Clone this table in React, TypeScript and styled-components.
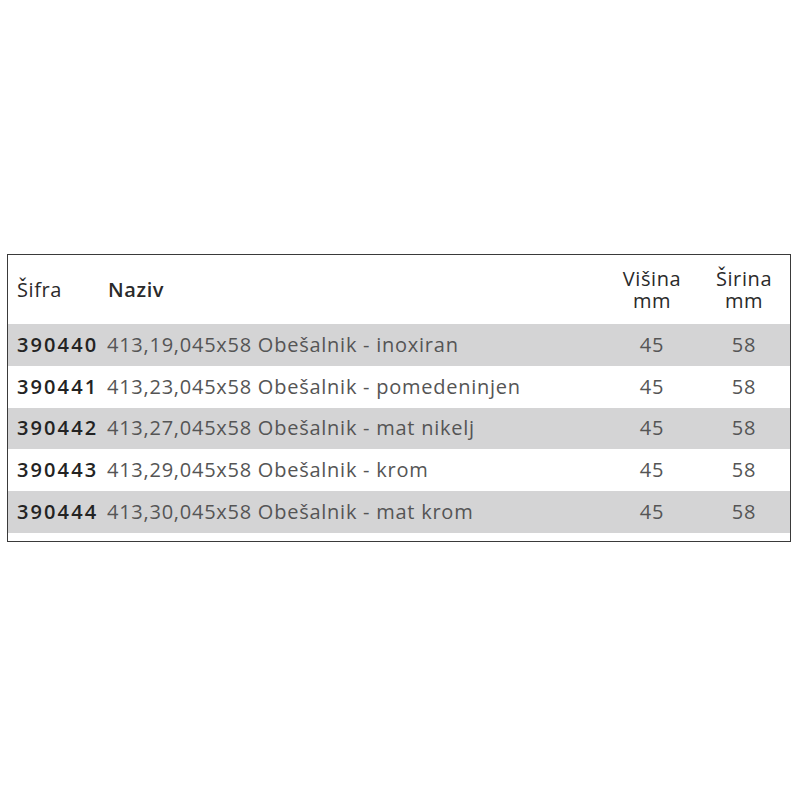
import React from "react";
import styled, { createGlobalStyle } from "styled-components";

const Global = createGlobalStyle`
  html, body { margin: 0; padding: 0; background: #fff; }
  body { font-family: "Open Sans", "Liberation Sans", sans-serif; }
`;

const Frame = styled.div`
  margin: 254px 0 0 7px;
  width: 784px;
  box-sizing: border-box;
  border: 1px solid #3a3a3a;
  padding-bottom: 8px;
`;

const Table = styled.table`
  width: 100%;
  border-collapse: collapse;
  table-layout: fixed;
`;

const HeadRow = styled.tr`
  height: 69px;
`;

const HeadCell = styled.th<{ $align?: "left" | "center"; $strong?: boolean }>`
  padding: 0 0 0 ${(p) => (p.$align === "center" ? 0 : 9)}px;
  text-align: ${(p) => p.$align ?? "left"};
  font-size: 20px;
  line-height: 22px;
  letter-spacing: 0.6px;
  font-weight: ${(p) => (p.$strong ? 600 : 400)};
  color: #2a2a2a;
  vertical-align: middle;
`;

const Row = styled.tr<{ $shaded: boolean }>`
  height: 41.8px;
  background: ${(p) => (p.$shaded ? "#d4d4d5" : "#fff")};
`;

const Code = styled.td`
  padding: 0 0 0 9px;
  font-size: 20px;
  line-height: 24px;
  font-weight: 600;
  letter-spacing: 2.1px;
  color: #232323;
  white-space: nowrap;
`;

const Name = styled.td`
  padding: 0 0 0 8px;
  font-size: 20px;
  line-height: 24px;
  letter-spacing: 0.75px;
  color: #555;
  white-space: nowrap;
`;

const Num = styled.td`
  text-align: center;
  font-size: 20px;
  line-height: 24px;
  letter-spacing: 0.8px;
  color: #555;
`;

const rows = [
  ["390440", "413,19,045x58 Obešalnik - inoxiran"],
  ["390441", "413,23,045x58 Obešalnik - pomedeninjen"],
  ["390442", "413,27,045x58 Obešalnik - mat nikelj"],
  ["390443", "413,29,045x58 Obešalnik - krom"],
  ["390444", "413,30,045x58 Obešalnik - mat krom"],
];

export default function App() {
  return (
    <>
      <Global />
      <Frame>
        <Table>
          <colgroup>
            <col style={{ width: 91 }} />
            <col />
            <col style={{ width: 92 }} />
            <col style={{ width: 92 }} />
          </colgroup>
          <thead>
            <HeadRow>
              <HeadCell>Šifra</HeadCell>
              <HeadCell $strong>Naziv</HeadCell>
              <HeadCell $align="center">Višina<br />mm</HeadCell>
              <HeadCell $align="center">Širina<br />mm</HeadCell>
            </HeadRow>
          </thead>
          <tbody>
            {rows.map(([c, n], i) => (
              <Row key={c} $shaded={i % 2 === 0}>
                <Code>{c}</Code>
                <Name>{n}</Name>
                <Num>45</Num>
                <Num>58</Num>
              </Row>
            ))}
          </tbody>
        </Table>
      </Frame>
    </>
  );
}
